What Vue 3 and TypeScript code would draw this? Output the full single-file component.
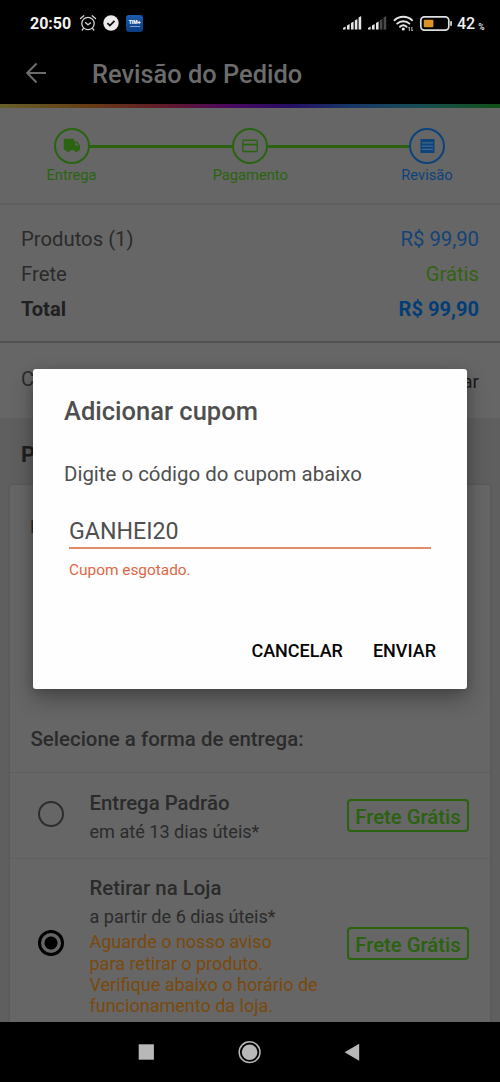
<template>
  <div class="screen">
    <header class="topbar">
      <div class="status">
        <span class="clock">20:50</span>
        <svg class="alarm" width="18" height="18" viewBox="0 0 18 18" fill="none" stroke="#d8d8d8" stroke-width="1.3" stroke-linecap="round" stroke-linejoin="round">
          <circle cx="9" cy="9.5" r="6.2" />
          <path d="M1.5 4.6 4.8 1.8M16.5 4.6 13.2 1.8M6.4 8.6 9 10.8l2.6-1.8M4.2 14.6 3.2 16M13.8 14.6l1 1.4" />
        </svg>
        <svg class="verified" width="16" height="16" viewBox="0 0 16 16">
          <circle cx="8" cy="8" r="7.7" fill="#ececec" />
          <path d="m4.4 8.2 2.5 2.4 4.6-4.8" fill="none" stroke="#111" stroke-width="1.8" />
        </svg>
        <span class="tim">TIM+<i></i></span>
        <svg class="signals" width="160" height="20" viewBox="0 0 160 20">
          <g fill="#e6e6e6">
            <path v-for="(b, i) in bars" :key="'a' + i" :d="barPath(b, 0)" />
            <path v-for="(b, i) in bars" :key="'b' + i" :d="barPath(b, 25)" :opacity="i > 2 ? 0.32 : 1" />
          </g>
          <g fill="none" stroke="#e6e6e6" stroke-width="1.9" stroke-linecap="round">
            <path d="M52.5 8.2a13 13 0 0 1 17.6 0M55.2 11.6a9 9 0 0 1 12.2 0M58 14.8a5 5 0 0 1 6.6 0" />
          </g>
          <circle cx="61.3" cy="17" r="1.6" fill="#e6e6e6" />
          <path d="M67.3 19v-4m-1 1.2 1-1.2M69.9 15v4m1-1.2-1 1.2" stroke="#bbb" stroke-width="1" fill="none" />
          <rect x="78.8" y="4.8" width="28" height="13.4" rx="3.6" fill="none" stroke="#dedede" stroke-width="1.7" />
          <rect x="81.8" y="7.8" width="9.6" height="7.4" rx="1" fill="#d99424" />
          <rect x="108.2" y="9" width="1.7" height="5" rx="0.8" fill="#dedede" />
        </svg>
        <span class="percent">42<small>%</small></span>
      </div>
      <div class="title-row">
        <svg width="24" height="24" viewBox="0 0 24 24" fill="none" stroke="#6c6c6c" stroke-width="2.1">
          <path d="M22 12H3.4M12.6 2.6 3.2 12l9.4 9.4" />
        </svg>
        <h1>Revisão do Pedido</h1>
      </div>
    </header>
    <div class="rainbow"></div>

    <section class="stepper">
      <div class="track"></div>
      <div v-for="step in steps" :key="step.label" class="step" :class="step.kind">
        <span class="circle">
          <svg v-if="step.kind === 'delivery'" width="18" height="16" viewBox="0 0 18 16">
            <path fill="currentColor" d="M1.9.8h9.2v2.8h2.4a1.4 1.4 0 0 1 1.2.6L17 8v4.3h-1.5a2.2 2.2 0 0 1-4.3 0H7.4a2.2 2.2 0 0 1-4.3 0h-1a1.3 1.3 0 0 1-1.3-1.3V1.9A1.1 1.1 0 0 1 1.9.8z" />
            <path fill="#666" d="M12.3 5h1.4l1.6 2.4h-3z" />
          </svg>
          <svg v-else-if="step.kind === 'payment'" width="16" height="14" viewBox="0 0 16 14" fill="none" stroke="currentColor">
            <rect x=".8" y="1.3" width="14.4" height="11.2" rx="1" stroke-width="1.4" />
            <path d="M1 5.6h14" stroke-width="1.7" />
          </svg>
          <svg v-else width="15" height="16" viewBox="0 0 15 16">
            <path fill="currentColor" d="M.5 1h14v14H.5z" />
            <path d="M2 4.9h11M2 8.1h11M2 11.3h11" stroke="#56718c" stroke-width="1" />
          </svg>
        </span>
        <span class="step-label">{{ step.label }}</span>
      </div>
    </section>

    <section class="summary">
      <div v-for="row in summary" :key="row.label" class="summary-row" :class="row.tone">
        <span>{{ row.label }}</span>
        <span class="value">{{ row.value }}</span>
      </div>
    </section>

    <section class="coupon">
      <span class="coupon-label">Cupom</span>
      <span class="add">Adicionar</span>
    </section>

    <main class="shipping">
      <h2>Pacote</h2>
      <div class="card">
        <div class="package">Produto</div>
        <h3>Selecione a forma de entrega:</h3>
        <div v-for="(opt, i) in options" :key="opt.name" class="option" :class="{ tall: opt.note.length }" @click="selected = i">
          <span class="radio" :class="{ checked: selected === i }"></span>
          <div class="info">
            <strong>{{ opt.name }}</strong>
            <span class="eta">{{ opt.eta }}</span>
            <p v-if="opt.note.length"><span v-for="line in opt.note" :key="line">{{ line }}</span></p>
          </div>
          <span class="badge">Frete Grátis</span>
        </div>
      </div>
    </main>

    <nav class="navbar">
      <svg width="500" height="60" viewBox="0 0 500 60" fill="#b8b8b8">
        <rect x="138.7" y="22.3" width="15.2" height="15.4" />
        <circle cx="249.6" cy="30.2" r="7.8" />
        <circle cx="249.6" cy="30.2" r="10.4" fill="none" stroke="#b8b8b8" stroke-width="1.5" />
        <path d="M359.2 21.8v17L344.6 30.3z" />
      </svg>
    </nav>

    <div class="dialog" role="dialog">
      <h2>Adicionar cupom</h2>
      <p class="message">Digite o código do cupom abaixo</p>
      <input v-model="code" type="text" />
      <p class="error">Cupom esgotado.</p>
      <div class="actions">
        <button class="cancel">CANCELAR</button>
        <button class="send">ENVIAR</button>
      </div>
    </div>
  </div>
</template>

<script setup lang="ts">
import { ref } from 'vue';

interface ShippingOption {
  name: string;
  eta: string;
  note: string[];
}

const code = ref('GANHEI20');
const selected = ref(1);

const steps = [
  { label: 'Entrega', kind: 'delivery' },
  { label: 'Pagamento', kind: 'payment' },
  { label: 'Revisão', kind: 'review' },
];

const summary = [
  { label: 'Produtos (1)', value: 'R$ 99,90', tone: 'price' },
  { label: 'Frete', value: 'Grátis', tone: 'free' },
  { label: 'Total', value: 'R$ 99,90', tone: 'total' },
];

const options: ShippingOption[] = [
  { name: 'Entrega Padrão', eta: 'em até 13 dias úteis*', note: [] },
  {
    name: 'Retirar na Loja',
    eta: 'a partir de 6 dias úteis*',
    note: ['Aguarde o nosso aviso', 'para retirar o produto.', 'Verifique abaixo o horário de', 'funcionamento da loja.'],
  },
];

// Signal bars: left offset and height
const bars = [
  { x: 1, h: 2.5 },
  { x: 5, h: 5 },
  { x: 9, h: 7.5 },
  { x: 12.8, h: 10 },
  { x: 16.6, h: 13 },
];

const barPath = (b: { x: number; h: number }, offset: number): string =>
  `M${b.x + offset} 17.5v${-b.h + 1}l2.6-1.4v${b.h + 0.4}z`;
</script>

<style>
body {
  margin: 0;
  background: #000;
}
</style>

<style scoped>
.screen {
  position: relative;
  width: 500px;
  height: 1082px;
  overflow: hidden;
  display: flex;
  flex-direction: column;
  background: #5f5f5f;
  color: #2b2b2b;
  font-family: Roboto, "Liberation Sans", sans-serif;
}

.screen * {
  box-sizing: border-box;
}

h1, h2, h3, p {
  margin: 0;
  font-weight: 500;
}

span {
  white-space: nowrap;
}

.topbar {
  height: 104px;
  background: #000;
  flex: none;
}

.status {
  height: 46px;
  display: flex;
  align-items: center;
  padding-left: 30px;
  color: #f2f2f2;
}

.clock {
  width: 49px;
  font-size: 16px;
  font-weight: 700;
}

.verified {
  margin-left: 6px;
}

.tim {
  width: 17px;
  height: 17px;
  margin-left: 7px;
  border-radius: 3px;
  background: linear-gradient(#1d5cae, #0a3c80);
  color: #fff;
  font-size: 5px;
  line-height: 14px;
  font-weight: 900;
  text-align: center;
}

.tim i {
  display: block;
  width: 10px;
  height: 1px;
  margin: -3px auto 0;
  background: #7e9fc9;
}

.signals {
  margin-left: 199px;
  margin-top: -3px;
}

.percent {
  margin-left: -45px;
  font-size: 16px;
  font-weight: 500;
}

.percent small {
  position: relative;
  top: 1px;
  margin-left: 3px;
  font-size: 8.5px;
}

.title-row {
  height: 56px;
  display: flex;
  align-items: center;
  gap: 44px;
  padding-left: 24px;
}

.title-row svg {
  margin-top: -2px;
}

.title-row h1 {
  font-size: 25.4px;
  line-height: 34px;
  color: #6c6c6c;
}

.rainbow {
  flex: none;
  height: 4px;
  background: linear-gradient(90deg, #64602b, #663b14 18%, #60172c 34%, #4a0860 46%, #240e60 58%, #173668 70%, #174d53 84%, #145019);
}

.stepper {
  position: relative;
  flex: none;
  height: 97px;
  padding: 20px 23px 0 21.5px;
  display: flex;
  justify-content: space-between;
  background: #666;
  border-bottom: 2px solid #5e5e5e;
}

.track {
  position: absolute;
  left: 72px;
  width: 355px;
  top: 37px;
  height: 3px;
  background: #2a6210;
}

.step {
  position: relative;
  width: 100px;
  display: flex;
  flex-direction: column;
  align-items: center;
  color: #2a6410;
}

.step.payment {
  left: 1px;
}

.step.review {
  color: #0c437c;
}

.circle {
  width: 36px;
  height: 36px;
  display: flex;
  align-items: center;
  justify-content: center;
  border: 2px solid currentColor;
  border-radius: 50%;
  background: #666;
}

.step-label {
  margin-top: 2px;
  font-size: 14.7px;
  line-height: 19px;
}

.summary {
  flex: none;
  height: 138px;
  padding: 16px 21px 0;
  background: #666;
  border-bottom: 2px solid #515151;
}

.summary-row {
  height: 35.3px;
  display: flex;
  justify-content: space-between;
  align-items: center;
  font-size: 20.3px;
}

.price .value {
  color: #134377;
}

.free .value {
  color: #336312;
}

.total {
  font-size: 20.1px;
  font-weight: 700;
  color: #202020;
}

.total .value {
  color: #033d78;
}

.coupon {
  flex: none;
  height: 75px;
  padding: 0 21px;
  display: flex;
  justify-content: space-between;
  align-items: center;
  background: #666;
  font-size: 20px;
}

.coupon-label {
  margin-top: -4px;
}

.add {
  margin-top: 2px;
  font-size: 19px;
  font-weight: 400;
  color: #1c1c1c;
}

.shipping {
  flex: none;
  height: 604px;
  padding: 0 10px;
  overflow: hidden;
}

.shipping h2 {
  height: 67px;
  padding: 7px 11px 0;
  line-height: 60px;
  font-size: 22px;
  font-weight: 700;
  color: #202020;
}

.card {
  height: 560px;
  background: #666;
  border-radius: 2px;
  box-shadow: 0 0 3px #525252;
}

.package {
  height: 221px;
  padding: 31px 20px;
  font-size: 18px;
}

.card h3 {
  height: 66px;
  padding-left: 20.5px;
  line-height: 66px;
  font-size: 20.45px;
}

.option {
  height: 86px;
  display: flex;
  align-items: center;
  border-top: 1px solid #5f5f5f;
  padding: 0 21px 0 28px;
}

.option.tall {
  height: 170px;
}

.radio {
  flex: none;
  width: 26px;
  height: 26px;
  margin-top: -3px;
  border: 2px solid #2d2d2d;
  border-radius: 50%;
}

.radio.checked {
  margin-top: -2px;
  border: 3px solid #000;
  background: radial-gradient(circle, #000 6px, transparent 7px);
}

.info {
  flex: 1;
  margin-left: 25.5px;
  padding-top: 3px;
  display: flex;
  flex-direction: column;
}

.tall .info {
  padding-top: 4px;
}

.info strong {
  font-size: 20.4px;
  line-height: 29px;
  font-weight: 500;
}

.eta {
  font-size: 18.1px;
  line-height: 28px;
}

.info p {
  font-size: 18px;
  line-height: 21.3px;
  font-weight: 400;
  color: #7a490c;
}

.info p span {
  display: block;
}

.badge {
  width: 122px;
  height: 33px;
  margin-top: -1px;
  border: 2px solid #2a6210;
  border-radius: 4px;
  color: #2a6210;
  font-size: 20.3px;
  line-height: 32px;
  font-weight: 500;
  text-align: center;
}

.navbar {
  flex: none;
  height: 60px;
  background: #000;
}

.dialog {
  position: absolute;
  left: 33px;
  top: 369px;
  width: 434px;
  height: 320px;
  padding: 26px 31px 0;
  background: #fefefe;
  border-radius: 3px;
  box-shadow: 0 10px 22px rgba(0, 0, 0, 0.3), 0 2px 8px rgba(0, 0, 0, 0.12);
  color: #4f4f4f;
}

.dialog h2 {
  font-size: 25.5px;
  line-height: 32px;
}

.message {
  margin-top: 32px;
  font-size: 20.45px;
  line-height: 30px;
  font-weight: 400;
  white-space: nowrap;
}

.dialog input {
  display: block;
  width: 362px;
  height: 37px;
  margin: 23px 0 0 5px;
  padding: 3px 0 0;
  border: 0;
  border-bottom: 2px solid #df8d68;
  outline: 0;
  background: transparent;
  color: #4f4f4f;
  font: 23.2px Roboto, sans-serif;
}

.error {
  margin: 11px 0 0 5px;
  font-size: 15.4px;
  line-height: 20px;
  font-weight: 400;
  color: #dd6743;
}

.actions {
  margin-top: 56px;
  display: flex;
  justify-content: flex-end;
  gap: 30px;
}

.actions button {
  padding: 0;
  border: 0;
  background: none;
  color: #050505;
  font: 500 18px/30px Roboto, sans-serif;
}
</style>
